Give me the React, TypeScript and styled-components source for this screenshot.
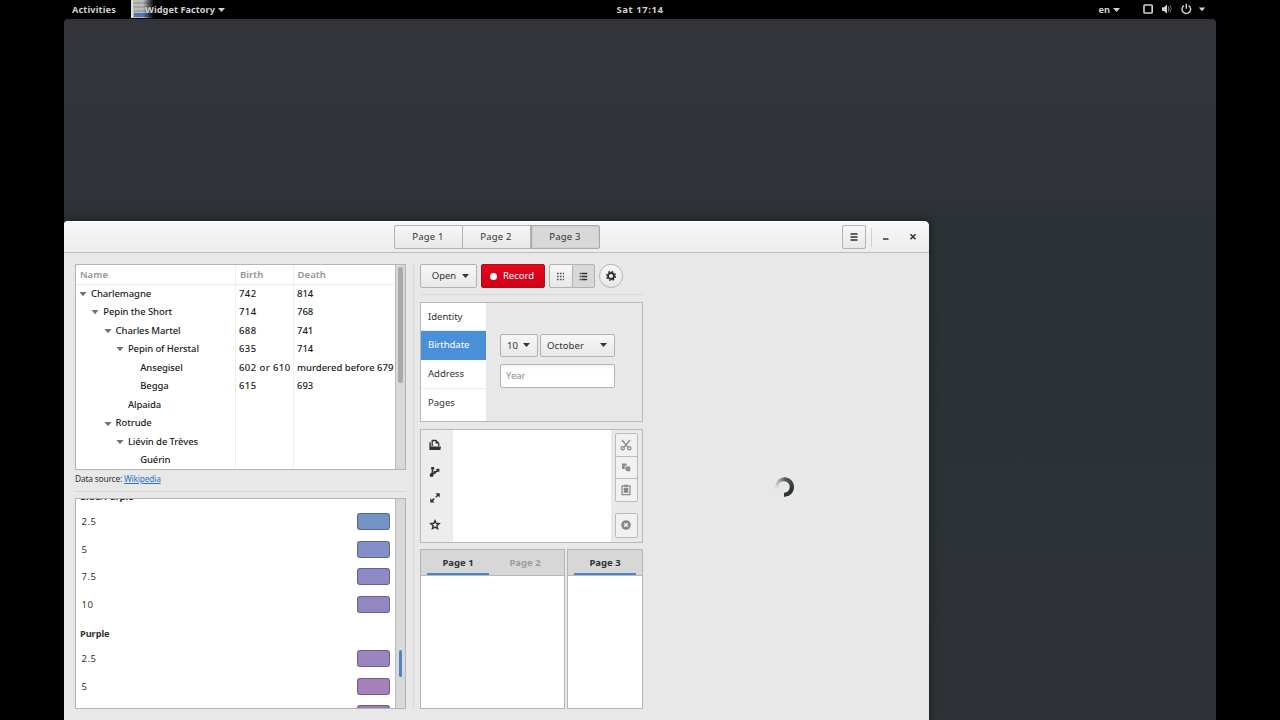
import React from "react";
import styled, { createGlobalStyle, css } from "styled-components";

const GlobalStyle = createGlobalStyle`
  * { box-sizing: border-box; }
  html, body { margin: 0; padding: 0; background: #000; overflow: hidden; }
  body { font-family: "Noto Sans", "Open Sans", sans-serif; font-size: 9.5px; color: #2e3436; }
`;

const Screen = styled.div`
  width: 1280px;
  height: 720px;
  padding: 0 64px;
  background: #000;
  overflow: hidden;
  display: flex;
  flex-direction: column;
`;

const TopBar = styled.header`
  height: 19px;
  flex: none;
  display: grid;
  grid-template-columns: 1fr auto 1fr;
  align-items: center;
  color: #d0d0d0;
  font-size: 9.2px;
  font-weight: 700;
  line-height: 19px;
  white-space: nowrap;
`;

const BarSide = styled.div<{ $end?: boolean }>`
  display: flex;
  align-items: center;
  height: 19px;
  ${(p) => (p.$end ? "justify-content: flex-end; padding-right: 9px;" : "padding-left: 8px;")}
`;

const Activities = styled.span`
  width: 58px;
  letter-spacing: 0.12px;
`;

const AppIcon = styled.svg`
  width: 26px;
  height: 19px;
  margin-right: -11px;
`;

const AppName = styled.span`
  margin-right: 3px;
  letter-spacing: 0.04px;
  position: relative;
`;

const Clock = styled.span`
  letter-spacing: 0.55px;
  font-size: 9.5px;
`;

const Desktop = styled.main`
  flex: 1;
  min-height: 0;
  padding-top: 202px;
  background: linear-gradient(#323439 0, #303439 170px, #2b3134 202px, #2e3237 100%);
  border-radius: 4px 4px 0 0;
  overflow: hidden;
`;

const Window = styled.section`
  width: 865px;
  height: 520px;
  border-radius: 4px 5px 0 0;
  background: #e8e8e8;
  box-shadow: 0 0 6px 2px rgba(20, 26, 28, 0.55);
  overflow: hidden;
`;

const TitleBar = styled.div`
  height: 32px;
  display: grid;
  grid-template-columns: 329.5px 1fr auto;
  align-items: center;
  border-top: 1px solid #fff;
  border-bottom: 1px solid #bdbdbd;
  background: linear-gradient(#f8f8f8, #ececec);
`;

const raised = css`
  border: 1px solid #b2b2b2;
  background: linear-gradient(#f7f7f7, #e8e8e8);
`;

const Switcher = styled.div`
  grid-column: 2;
  display: flex;
  width: 206px;
  height: 24px;
`;

const SwitchButton = styled.div<{ $active?: boolean }>`
  ${raised}
  flex: 1;
  display: flex;
  align-items: center;
  justify-content: center;
  font-size: 9.5px;
  letter-spacing: 0.18px;
  padding-bottom: 1px;
  & + & { border-left: 0; }
  &:first-child { border-radius: 2px 0 0 2px; }
  &:last-child { border-radius: 0 2px 2px 0; }
  ${(p) => p.$active && "background: #d8d8d8; border-color: #a9a9a9; box-shadow: inset 0 0 0 1px #cfcfcf; border-left: 1px solid #a9a9a9 !important;"}
`;

const WindowControls = styled.div`
  display: flex;
  align-items: center;
  height: 24px;
  padding-right: 11px;
`;

const MenuButton = styled.div`
  ${raised}
  width: 24px;
  height: 24px;
  border-radius: 2px;
  display: grid;
  place-items: center;
`;

const ControlRule = styled.i`
  width: 1px;
  height: 19px;
  margin: 0 9px 0 5px;
  background: #cfcfcf;
`;

const ControlIcon = styled.svg`
  width: 10px;
  height: 10px;
  & + & { margin-left: 17px; }
`;

const Content = styled.div`
  display: flex;
  padding: 11px 0 0 11px;
`;

const LeftPane = styled.div`
  width: 331px;
`;

const ScrollFrame = styled.div<{ $h: number }>`
  height: ${(p) => p.$h}px;
  border: 1px solid #b4b4b4;
  background: #fff;
  display: flex;
  overflow: hidden;
`;

const ScrollBody = styled.div`
  flex: 1;
  min-width: 0;
  overflow: hidden;
`;

const Track = styled.div`
  width: 10px;
  flex: none;
  padding: 0 3px;
  border-left: 1px solid #bcbcbc;
  background: #d8d8d8;
`;

const Thumb = styled.div<{ $top: number; $h: number; $w: number; $color: string }>`
  width: ${(p) => p.$w}px;
  height: ${(p) => p.$h}px;
  margin: ${(p) => p.$top}px 0 0 ${(p) => (p.$w > 3 ? -1 : 0)}px;
  border-radius: 2px;
  background: ${(p) => p.$color};
`;

const TreeRow = styled.div<{ $head?: boolean }>`
  display: grid;
  grid-template-columns: ${(p) => (p.$head ? "159px 58px 1fr" : "160px 57px 1fr")};
  height: ${(p) => (p.$head ? 19.6 : 18.54)}px;
  line-height: 18.5px;
  color: ${(p) => (p.$head ? "#929595" : "#1a1c1d")};
  font-weight: 500;
  white-space: nowrap;
  ${(p) => p.$head && "border-bottom: 1px solid #ececec; font-weight: 600; line-height: 19px;"}
`;

const Cell = styled.div<{ $head?: boolean; $wide?: boolean }>`
  padding-left: ${(p) => (p.$head ? 4 : 3)}px;
  letter-spacing: ${(p) => (p.$wide ? 0.42 : p.$head ? 0.08 : 0)}px;
  & + & { border-left: 1px solid #efefef; }
  & + &:last-child { padding-left: ${(p) => (p.$head ? 3.5 : 1.6)}px; }
`;

const NameCell = styled.div<{ $depth: number }>`
  display: flex;
  align-items: center;
  padding-left: ${(p) => 3 + p.$depth * 12.3}px;
  border-right: 1px solid #efefef;
  letter-spacing: -0.1px;
`;

const Expander = styled.svg`
  width: 8px;
  height: 6px;
  margin-right: 4px;
`;

const Source = styled.div`
  height: 21px;
  padding-top: 3px;
  line-height: 12px;
  font-size: 8.4px;
  letter-spacing: -0.19px;
`;

const Link = styled.a`
  color: #2a76c6;
  text-decoration: underline;
`;

const Rule = styled.div<{ $gap: number }>`
  height: 1px;
  margin-bottom: ${(p) => p.$gap}px;
  background: #d9d9d9;
`;

const ColorList = styled.div`
  margin-top: -18px;
`;

const ColorHeading = styled.div`
  height: 27.2px;
  padding: 5px 0 0 4px;
  line-height: 22px;
  font-weight: 700;
  font-size: 9.3px;
  letter-spacing: -0.1px;
`;

const ColorRow = styled.div`
  height: 27.4px;
  padding: 0 5px 0 5.5px;
  letter-spacing: 0.5px;
  display: flex;
  align-items: center;
  justify-content: space-between;
`;

const Swatch = styled.span<{ $color: string }>`
  width: 33.5px;
  height: 17px;
  margin-left: auto;
  border: 1px solid rgba(60, 60, 90, 0.5);
  border-radius: 3px;
  background: ${(p) => p.$color};
`;

const PaneRule = styled.div`
  width: 1px;
  height: 445px;
  margin: 0 6px 0 7px;
  background: #d9d9d9;
`;

const RightPane = styled.div`
  width: 223px;
`;

const Toolbar = styled.div`
  display: flex;
  gap: 4px;
  height: 24px;
  margin-bottom: 6px;
`;

const Button = styled.div<{ $w: number; $red?: boolean; $round?: boolean }>`
  ${raised}
  width: ${(p) => p.$w}px;
  height: ${(p) => (p.$round ? 23.5 : 24)}px;
  display: flex;
  align-items: center;
  justify-content: center;
  gap: 6px;
  border-radius: ${(p) => (p.$round ? "50%" : "2px")};
  line-height: 20px;
  padding-left: 4px;
  white-space: nowrap;
  ${(p) => p.$round && "padding: 0;"}
  ${(p) => p.$red && "padding: 0 2px 0 0; border-color: #a8101f; background: linear-gradient(#e4081e, #d20019); color: #fff;"}
`;

const Toggles = styled.div`
  display: flex;
  width: 46px;
`;

const Toggle = styled.div<{ $on?: boolean }>`
  ${raised}
  flex: 1;
  display: grid;
  place-items: center;
  border-radius: 2px 0 0 2px;
  ${(p) => p.$on && "background: #d8d8d8; border-left: 0; border-radius: 0 2px 2px 0;"}
`;

const Dot = styled.i`
  width: 7px;
  height: 7px;
  border-radius: 50%;
  background: #fff;
`;

const Frame = styled.div<{ $h: number; $gap: number }>`
  height: ${(p) => p.$h}px;
  margin-bottom: ${(p) => p.$gap}px;
  border: 1px solid #b9b9b9;
  display: flex;
`;

const Sidebar = styled.nav`
  width: 65px;
  background: #fff;
`;

const SideItem = styled.div<{ $on?: boolean }>`
  height: 29px;
  padding-left: 7px;
  line-height: 28px;
  font-size: 9.6px;
  letter-spacing: -0.05px;
  border-bottom: 1px solid #ededed;
  &:first-child { height: 28.4px; }
  &:last-child { border-bottom: 0; }
  ${(p) => p.$on && "background: #4a90d9; border-color: #4a90d9; color: #fff; letter-spacing: -0.1px;"}
`;

const Form = styled.div`
  width: 115px;
  margin: 31px 0 0 14px;
`;

const FormRow = styled.div`
  display: flex;
  gap: 2px;
  margin-bottom: 7px;
`;

const Select = styled.div<{ $w: number }>`
  ${raised}
  width: ${(p) => p.$w}px;
  height: 23.5px;
  padding: 0 7px 0 6px;
  display: flex;
  align-items: center;
  justify-content: space-between;
  border-radius: 2px;
  letter-spacing: 0.1px;
`;

const Entry = styled.div`
  height: 23.5px;
  padding-left: 5px;
  line-height: 22px;
  border: 1px solid #b4b4b4;
  border-radius: 2px;
  background: linear-gradient(#f6f6f6, #fff 5px);
  color: #8b8e8f;
`;

const ToolColumn = styled.div`
  width: 31.5px;
  padding: 9.5px 3px 0 0;
  display: flex;
  flex-direction: column;
  align-items: center;
  gap: 14.6px;
  background: #ededed;
`;

const Paper = styled.div`
  flex: 1;
  background: #fff;
`;

const ButtonColumn = styled.div`
  width: 31px;
  padding: 3px 4px 0 3.5px;
  background: #e9e9e9;
`;

const Stack = styled.div`
  margin-bottom: 11.5px;
  border: 1px solid #bbbbbb;
  border-radius: 2px;
  background: #f1f1f1;
`;

const StackButton = styled.div`
  height: 22.4px;
  display: grid;
  place-items: center;
  & + & { border-top: 1px solid #bbbbbb; }
`;

const Icon = styled.svg`
  width: 12px;
  height: 12px;
  display: block;
  overflow: visible;
`;

const Notebooks = styled.div`
  display: flex;
  gap: 2px;
`;

const Notebook = styled.div<{ $w: number }>`
  width: ${(p) => p.$w}px;
  height: 160px;
  border: 1px solid #b4b4b4;
  background: #fff;
`;

const Tabs = styled.div`
  height: 26px;
  padding-left: 6px;
  display: flex;
  border-bottom: 1px solid #b9b9b9;
  background: #d7d7d7;
  gap: 5px;
`;

const Tab = styled.div<{ $on?: boolean }>`
  width: 62px;
  height: 25px;
  line-height: 26px;
  text-align: center;
  font-weight: 700;
  font-size: 9.5px;
  color: ${(p) => (p.$on ? "#2e3436" : "#9b9d9d")};
  border-bottom: 2px solid ${(p) => (p.$on ? "#4a86c5" : "transparent")};
`;

const SpinnerArea = styled.div`
  flex: 1;
  display: flex;
  justify-content: center;
  padding-top: 213px;
`;

const Spinner = styled.div`
  width: 20px;
  height: 20px;
  margin-right: 2px;
  border-radius: 50%;
  background: conic-gradient(#55595a 0deg, #2e3436 110deg, #2e3436 185deg, transparent 188deg, transparent 250deg, #dcdcdc 265deg, #b3b4b4 310deg, #77797a 345deg, #55595a 360deg);
  mask: radial-gradient(circle at 45% 50%, transparent 5.2px, #000 6.2px, #000 9.5px, transparent 10.5px);
`;

const Caret = ({ color = "#2e3436" }: { color?: string }) => (
  <svg width="7" height="4" viewBox="0 0 7 4">
    <path d="M0 0h7L3.5 4z" fill={color} />
  </svg>
);

const Language = styled.span`
  display: flex;
  align-items: center;
  gap: 3px;
  margin-right: 23px;
`;

type Person = [number, boolean, string, string, string];
const people: Person[] = [
  [0, true, "Charlemagne", "742", "814"],
  [1, true, "Pepin the Short", "714", "768"],
  [2, true, "Charles Martel", "688", "741"],
  [3, true, "Pepin of Herstal", "635", "714"],
  [4, false, "Ansegisel", "602 or 610", "murdered before 679"],
  [4, false, "Begga", "615", "693"],
  [3, false, "Alpaida", "", ""],
  [2, true, "Rotrude", "", ""],
  [3, true, "Liévin de Trèves", "", ""],
  [4, false, "Guérin", "", ""],
];

const bluePurple = [["2.5", "#7393c4"], ["5", "#828fc6"], ["7.5", "#8c89c4"], ["10", "#9487c0"]];
const purple = [["2.5", "#9c84bf"], ["5", "#a57fb7"], ["", "#a07aa8"]];

const Colors = ({ items }: { items: string[][] }) => (
  <>
    {items.map(([name, color]) => (
      <ColorRow key={color}>
        {name && <span>{name}</span>}
        <Swatch $color={color} />
      </ColorRow>
    ))}
  </>
);

const StatusIcons = () => (
  <svg width="64" height="19" viewBox="0 0 64 19" fill="none">
    <rect x="1" y="5" width="8.2" height="8" rx="0.8" stroke="#d2d2d2" strokeWidth="1.6" />
    <path d="M19 7.2h2l3-2.8v9.4l-3-2.8h-2z" fill="#d2d2d2" />
    <path d="M25.3 6.7q1.7 2.4 0 4.8" stroke="#aaa" />
    <path d="M26.8 5q3 4 0 8" stroke="#666" />
    <path d="M41 5.6a4.3 4.3 0 1 0 4.6 0M43.3 3.8v5" stroke="#d2d2d2" strokeWidth="1.4" />
    <path d="M55.8 7.4h6.4l-3.2 3.8z" fill="#d2d2d2" />
  </svg>
);

export default function App() {
  return (
    <Screen>
      <GlobalStyle />
      <TopBar>
        <BarSide>
          <Activities>Activities</Activities>
          <AppIcon viewBox="0 0 26 19">
            <defs>
              <linearGradient id="fade">
                <stop offset="0.5" stopColor="#000" stopOpacity="0" />
                <stop offset="0.92" stopColor="#000" />
              </linearGradient>
            </defs>
            <path d="M1 0h25v18H1z" fill="#b9beb9" />
            <path d="M1 0h2v18H1z" fill="#deded8" />
            <path d="M4 3h22M4 7h22M4 11h22" stroke="#858c8c" />
            <path d="M4 13h22v4H4z" fill="#4a78b4" />
            <path d="M0 0h26v19H0z" fill="url(#fade)" />
          </AppIcon>
          <AppName>Widget Factory</AppName>
          <Caret color="#d0d0d0" />
        </BarSide>
        <Clock>Sat 17:14</Clock>
        <BarSide $end>
          <Language>
            en <Caret color="#d0d0d0" />
          </Language>
          <StatusIcons />
        </BarSide>
      </TopBar>
      <Desktop>
        <Window>
          <TitleBar>
            <Switcher>
              <SwitchButton>Page 1</SwitchButton>
              <SwitchButton>Page 2</SwitchButton>
              <SwitchButton $active>Page 3</SwitchButton>
            </Switcher>
            <WindowControls>
              <MenuButton>
                <ControlIcon viewBox="0 0 10 10">
                  <path d="M1.5 2h7M1.5 5h7M1.5 8h7" stroke="#2e3436" strokeWidth="1.5" />
                </ControlIcon>
              </MenuButton>
              <ControlRule />
              <ControlIcon viewBox="0 0 10 10">
                <path d="M2 7h5.5" stroke="#2e3436" strokeWidth="1.5" />
              </ControlIcon>
              <ControlIcon viewBox="0 0 10 10">
                <path d="M2.5 2.3l5 5M7.5 2.3l-5 5" stroke="#2e3436" strokeWidth="1.5" />
              </ControlIcon>
            </WindowControls>
          </TitleBar>
          <Content>
            <LeftPane>
              <ScrollFrame $h={206}>
                <ScrollBody>
                  <TreeRow $head>
                    <Cell $head>Name</Cell>
                    <Cell $head>Birth</Cell>
                    <Cell $head>Death</Cell>
                  </TreeRow>
                  {people.map(([depth, open, name, birth, death]) => (
                    <TreeRow key={name}>
                      <NameCell $depth={depth}>
                        <Expander viewBox="0 0 8 6">{open && <path d="M0.5 1h7l-3.5 4.2z" fill="#6f7273" />}</Expander>
                        {name}
                      </NameCell>
                      <Cell $wide>{birth}</Cell>
                      <Cell>{death}</Cell>
                    </TreeRow>
                  ))}
                </ScrollBody>
                <Track>
                  <Thumb $top={2} $h={116} $w={5} $color="#a9abab" />
                </Track>
              </ScrollFrame>
              <Source>
                Data source: <Link>Wikipedia</Link>
              </Source>
              <Rule $gap={6} />
              <ScrollFrame $h={211}>
                <ScrollBody>
                  <ColorList>
                    <ColorHeading>Blue/Purple</ColorHeading>
                    <Colors items={bluePurple} />
                    <ColorHeading>Purple</ColorHeading>
                    <Colors items={purple} />
                  </ColorList>
                </ScrollBody>
                <Track>
                  <Thumb $top={151} $h={27} $w={3} $color="#4a86c5" />
                </Track>
              </ScrollFrame>
            </LeftPane>
            <PaneRule />
            <RightPane>
              <Toolbar>
                <Button $w={57}>
                  <span>Open</span>
                  <Caret />
                </Button>
                <Button $w={64} $red>
                  <Dot />
                  <span>Record</span>
                </Button>
                <Toggles>
                  <Toggle>
                    <svg width="9" height="9" viewBox="0 0 9 9">
                      {[0, 3, 6].map((y) => (
                        <path key={y} d={`M1 ${y + 1.5}h7`} stroke="#4a4e50" strokeWidth="1.6" strokeDasharray="1.6 1.3" />
                      ))}
                    </svg>
                  </Toggle>
                  <Toggle $on>
                    <svg width="9" height="9" viewBox="0 0 9 9">
                      {[0, 3, 6].map((y) => (
                        <path key={y} d={`M0.7 ${y + 1.5}h1.1M2.4 ${y + 1.5}h5.8`} stroke="#2e3436" strokeWidth="1.4" />
                      ))}
                    </svg>
                  </Toggle>
                </Toggles>
                <Button $w={23.5} $round>
                  <svg width="12" height="12" viewBox="0 0 12 12" fill="none" stroke="#2e3436">
                    <circle cx="6" cy="6" r="3" strokeWidth="1.9" />
                    <circle cx="6" cy="6" r="4.4" strokeWidth="1.3" strokeDasharray="1.73 1.73" />
                  </svg>
                </Button>
              </Toolbar>
              <Rule $gap={6.6} />
              <Frame $h={120} $gap={7}>
                <Sidebar>
                  <SideItem>Identity</SideItem>
                  <SideItem $on>Birthdate</SideItem>
                  <SideItem>Address</SideItem>
                  <SideItem>Pages</SideItem>
                </Sidebar>
                <Form>
                  <FormRow>
                    <Select $w={38}>
                      10 <Caret />
                    </Select>
                    <Select $w={75}>
                      October <Caret />
                    </Select>
                  </FormRow>
                  <Entry>Year</Entry>
                </Form>
              </Frame>
              <Frame $h={114} $gap={6.4}>
                <ToolColumn>
                  <Icon viewBox="0 0 12 12">
                    <path d="M3.2 7V1.5h3.6L9.7 4.3V7" fill="none" stroke="#2e3436" strokeWidth="1.3" />
                    <path d="M6.6 1v3.6h3.3zM.4 3.2h1.4v4.3H12l-.6 3.5H.4z" fill="#2e3436" />
                  </Icon>
                  <Icon viewBox="0 0 12 12">
                    <path d="M3 9.2L3.6 2.5M3 8.7L9 4.4" fill="none" stroke="#2e3436" strokeWidth="1.5" />
                    <circle cx="2.6" cy="9.1" r="2" fill="#2e3436" />
                    <path d="M2.2 1h3v2.4h-3zM7.4 2.8h3v3h-3zM4.6 5h2.2v2.4H4.6z" fill="#2e3436" />
                  </Icon>
                  <Icon viewBox="0 0 12 12">
                    <path d="M6.4 1.3h4.3v4.3zM1.3 6.2v4.3h4.3z" fill="#2e3436" />
                    <path d="M9.8 2.2L6.8 5.2M2.2 9.6l3-3" stroke="#2e3436" strokeWidth="1.5" />
                  </Icon>
                  <Icon viewBox="0 0 12 12">
                    <path d="M6 1.6l1.2 2.7 3 .3-2.3 2 .7 3L6 8.1 3.4 9.6l.7-3-2.3-2 3-.3z" fill="none" stroke="#2e3436" strokeWidth="1.4" />
                  </Icon>
                </ToolColumn>
                <Paper />
                <ButtonColumn>
                  <Stack>
                    <StackButton>
                      <Icon viewBox="0 0 12 12" fill="none" stroke="#858889" strokeWidth="1.3">
                        <path d="M2 1l5.8 7.2M10 1L4.2 8.2" />
                        <circle cx="2.7" cy="9.2" r="1.6" />
                        <circle cx="9.3" cy="9.2" r="1.6" />
                      </Icon>
                    </StackButton>
                    <StackButton>
                      <Icon viewBox="0 0 12 12" fill="#8b8e8f">
                        <path d="M2 1.5h4.5v2.2H4.7v3.4H2zM5.4 4.4h4.8v4.8H7L5.4 7.8z" />
                      </Icon>
                    </StackButton>
                    <StackButton>
                      <Icon viewBox="0 0 12 12">
                        <path d="M2 1.8h8v8.8H2z" fill="none" stroke="#858889" strokeWidth="1.2" />
                        <path d="M3.7 3.8h4.6v5H3.7zM4.3.8h3.4v2H4.3z" fill="#858889" />
                      </Icon>
                    </StackButton>
                  </Stack>
                  <Stack>
                    <StackButton>
                      <Icon viewBox="0 0 12 12">
                        <circle cx="6" cy="6" r="4.8" fill="#858889" />
                        <path d="M4.2 4.2l3.6 3.6M7.8 4.2L4.2 7.8" stroke="#f1f1f1" strokeWidth="1.4" />
                      </Icon>
                    </StackButton>
                  </Stack>
                </ButtonColumn>
              </Frame>
              <Notebooks>
                <Notebook $w={145}>
                  <Tabs>
                    <Tab $on>Page 1</Tab>
                    <Tab>Page 2</Tab>
                  </Tabs>
                </Notebook>
                <Notebook $w={76}>
                  <Tabs>
                    <Tab $on>Page 3</Tab>
                  </Tabs>
                </Notebook>
              </Notebooks>
            </RightPane>
            <SpinnerArea>
              <Spinner />
            </SpinnerArea>
          </Content>
        </Window>
      </Desktop>
    </Screen>
  );
}
